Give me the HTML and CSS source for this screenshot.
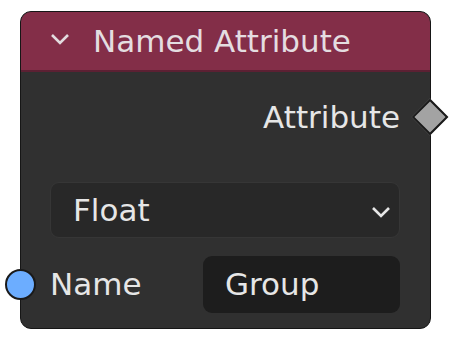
FILE: index.html
```html
<!DOCTYPE html>
<html>
<head>
    <title>Named Attribute</title>
    <link rel="stylesheet" href="styles.css">
</head>
<body>
    <div class="node">
        <div class="node-header">
            <svg class="header-chevron" width="20" height="14" viewBox="0 0 20 14">
                <polyline points="2,3 10,11 18,3" fill="none" stroke="#e2dcdf" stroke-width="2.6"/>
            </svg>
            <span class="node-title">Named Attribute</span>
        </div>
        <div class="node-body">
            <div class="row row-output">
                <span class="label">Attribute</span>
                <span class="socket-diamond"></span>
            </div>
            <div class="dropdown">
                <span class="label">Float</span>
                <svg class="drop-chevron" width="20" height="13" viewBox="0 0 20 13">
                    <polyline points="2,2 10,10 18,2" fill="none" stroke="#e6e6e6" stroke-width="2.6"/>
                </svg>
            </div>
            <div class="row row-input">
                <span class="socket-circle"></span>
                <span class="label">Name</span>
                <div class="text-field">Group</div>
            </div>
        </div>
    </div>
</body>
</html>
```

FILE: styles.css
```css
body {
    margin: 0;
    padding: 11px 0 0 20px;
    background-color: #ffffff;
    font-family: "DejaVu Sans", sans-serif;
}
.node {
    width: 409px;
    height: 316px;
    background-color: #303030;
    border: 1px solid #161616;
    border-radius: 11px;
}
.node-header {
    height: 60px;
    box-sizing: border-box;
    display: flex;
    align-items: center;
    background-color: #832e48;
    border-bottom: 2px solid #5c2033;
    border-radius: 10px 10px 0 0;
    padding-left: 29px;
}
.header-chevron {
    margin-top: -4px;
}
.node-title {
    margin-left: 23px;
    color: #e4dde0;
    font-size: 31px;
    line-height: 1;
}
.node-body {
    display: flex;
    flex-direction: column;
    padding: 23px 30px 0 29px;
}
.label {
    color: #e6e6e6;
    font-size: 31px;
    line-height: 1;
}
.row {
    position: relative;
    display: flex;
    align-items: center;
}
.row-output {
    height: 44px;
    justify-content: flex-end;
}
.socket-diamond {
    position: absolute;
    right: -43px;
    top: 9px;
    width: 22px;
    height: 22px;
    background-color: #a3a3a3;
    border: 2px solid #1a1a1a;
    transform: rotate(45deg);
}
.dropdown {
    margin-top: 43px;
    height: 56px;
    box-sizing: border-box;
    display: flex;
    align-items: center;
    justify-content: space-between;
    padding: 0 8px 0 22px;
    background-color: #282828;
    border: 1px solid #363636;
    border-radius: 9px;
}
.drop-chevron {
    margin-top: 4px;
}
.row-input {
    margin-top: 18px;
    height: 57px;
    justify-content: space-between;
}
.socket-circle {
    position: absolute;
    left: -45px;
    top: 13px;
    width: 27px;
    height: 27px;
    border-radius: 50%;
    background-color: #6cadff;
    border: 2px solid #1a1a1a;
}
.text-field {
    width: 197px;
    height: 57px;
    box-sizing: border-box;
    display: flex;
    align-items: center;
    padding-left: 22px;
    background-color: #1d1d1d;
    border-radius: 9px;
    color: #e6e6e6;
    font-size: 31px;
    line-height: 1;
}
```
